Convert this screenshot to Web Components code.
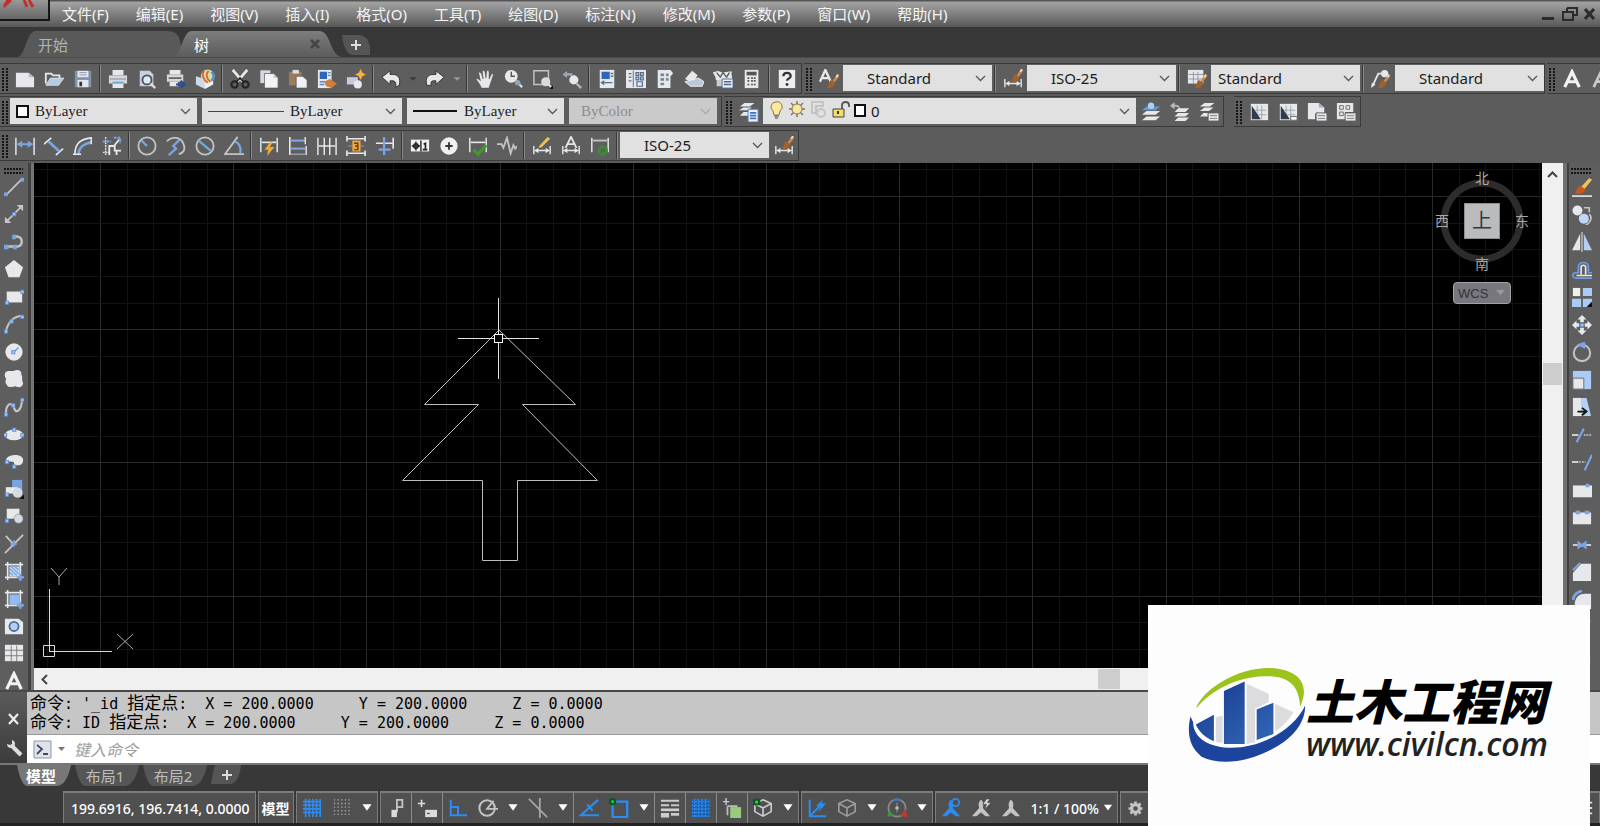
<!DOCTYPE html>
<html lang="zh-CN">
<head>
<meta charset="utf-8">
<title>树</title>
<style>
html,body{margin:0;height:100%;overflow:hidden;background:#5c5c5c}
body{font-family:"Noto Sans","Noto Sans CJK SC",sans-serif;font-size:15px;color:#fff}
</style>
</head>
<body>
<cad-app></cad-app>
<script>
const W='#e6e8ec',B='#7aa5e2',O='#f0a83c',BR='#a0622c',BL='#2b8cf2',LG='#c4c4c4';
const dimBar=`<path d="M2 11v9M20 11v9M3 16h16" stroke="${W}" stroke-width="1.500" fill="none"/><path d="M3 16l4-3v6zM19 16l-4-3v6z" fill="${W}"/>`;
const brush=(x,y)=>`<g transform="translate(${x} ${y})"><path d="M7 5L12-2" stroke="#c98a55" stroke-width="3"/><path d="M10 0l2-3" stroke="#f3dcc4" stroke-width="2"/><path d="M-1 11c3-1 2-5 5-8l5 3c-1 5-6 7-10 5z" fill="${BR}"/></g>`;
const dim=(y=6)=>`<path d="M2 ${y-4}v16M20 ${y-4}v16" stroke="${W}" stroke-width="1.600" fill="none"/>`;
const gear=`<circle cx="11" cy="11" r="5" fill="none" stroke="${LG}" stroke-width="4"/><path d="M11 2v4M11 16v4M2 11h4M16 11h4M4.500 4.500l3 3M14.500 14.500l3 3M4.500 17.500l3-3M14.500 7.500l3-3" stroke="${LG}" stroke-width="3.500"/>`;
const sheet=`<rect x="2" y="2" width="19" height="18" fill="${W}"/><path d="M9 4v15M14 4v15M3 9h16M3 14h16" stroke="#9aa3ae"/>`;
const person=c=>`<path d="M11 2c3 2 3 6 2 9l8 9h-5l-5-4-5 4H1l8-9c-1-3-1-7 2-9z" fill="${c}"/>`;
const cube=(c)=>`<path d="M11 2l9 4v9l-9 5-9-5V6zM2 6l9 5 9-5M11 11v9" fill="none" stroke="${c}" stroke-width="1.800"/>`;
const node=(x,y)=>`<rect x="${x-1.500}" y="${y-1.500}" width="3.500" height="3.500" fill="#a9c8f5" stroke="#5d8edb"/>`;
const ICONS={
new:`<path d="M1 4h14l6 5v11H1z" fill="${W}"/><path d="M15 4v5h6z" fill="#b5bcc6"/>`,
open:`<path d="M2 16V5h6l2 2h7v3" fill="none" stroke="${W}" stroke-width="2"/><path d="M2 18l5-8h15l-6 8z" fill="#b9cbe0" stroke="${W}" stroke-width=".8"/>`,
save:`<path d="M2 2h18v18H2z" fill="#7f93ad"/><path d="M5 2h12v7H5z" fill="${W}"/><path d="M7 4h8M7 6.500h8" stroke="#8b95a3"/><path d="M5 12h12v8H5z" fill="#e4e8ee"/><path d="M7 14h3v5H7z" fill="#333"/>`,
print:`<path d="M5 1h12v6H5zM5 15h12v6H5z" fill="${W}"/><path d="M1 7h20v9H1z" fill="#d4d7dc"/><path d="M2 11h18" stroke="#888"/><path d="M5 15h12" stroke="#69a6d6" stroke-width="2"/>`,
preview:`<path d="M3 2h11l4 4v13H3z" fill="#c7d0dc"/><circle cx="11" cy="12" r="5" fill="#d9ecf6" stroke="#4b5057" stroke-width="2"/><path d="M15 16l5 5" stroke="#ddd" stroke-width="2.500"/>`,
publish:`<path d="M4 1h12v5H4zM4 14h9v5H4z" fill="${W}"/><path d="M1 6h18v8H1z" fill="#d4d7dc"/><path d="M3 10h14" stroke="#444" stroke-width="1.500"/><path d="M11 17h9M16 13l5 4-5 4" stroke="#234f9e" stroke-width="2.200" fill="none"/>`,
globe:`<path d="M1 8l10 3v11l-10-5z" fill="#cfd9e8"/><path d="M11 11l9-3v9l-9 5z" fill="#eef2f7"/><circle cx="14" cy="8" r="7.500" fill="#cfe2a4"/><path d="M10 2c-3 4-1 10 4 13M15 2c-4 4-2 9 2 12" stroke="#e0603a" stroke-width="2" fill="none"/><path d="M18 3c3 3 3 7 0 10" stroke="#4b8fd6" stroke-width="2.500" fill="none"/>`,
cut:`<path d="M3 1l11 13M19 1L8 14" stroke="${W}" stroke-width="3"/><circle cx="5" cy="17" r="3.500" fill="none" stroke="#262626" stroke-width="2.500"/><circle cx="17" cy="17" r="3.500" fill="none" stroke="#262626" stroke-width="2.500"/><path d="M7 14l4-4 4 4" stroke="#262626" stroke-width="2" fill="none"/>`,
copy:`<path d="M1 1h12v15H1z" fill="#d6d9df" stroke="#555" stroke-width=".8"/><path d="M6 5h10l5 5v11H6z" fill="#f1f2f5" stroke="#555" stroke-width=".8"/><path d="M16 5v5h5" fill="#c2c7cf"/>`,
paste:`<path d="M1 3h14v15H1z" fill="#9a7c5c"/><path d="M5 1h7v4H5z" fill="#ddd"/><path d="M9 8h7l5 4v9H9z" fill="#f1f2f5" stroke="#555" stroke-width=".8"/>`,
match:`<path d="M1 1h15v20H1z" fill="${W}"/><path d="M3 3h8v8H3z" fill="#2f66b8"/><path d="M12 4h3M12 7h3M3 14h6M3 17h5" stroke="#5f87c8" stroke-width="1.500"/><path d="M8 14l6-3 8 5-6 5-6-2z" fill="#cf7d38"/>`,
bedit:`<path d="M1 9h12v8H1z" fill="#c4cbe0"/><circle cx="13" cy="17" r="4.500" fill="${W}"/><path d="M16 0l2 4 4 2-4 2-2 4-2-4-4-2 4-2z" fill="#f9b03c"/>`,
undo:`<path d="M1 9l9-7v4h3c6 0 9 4 7 12l-4 2c1-5 0-7-4-7h-2v4z" fill="${W}" stroke="#2e2e2e" stroke-width="1"/>`,
redo:`<path d="M21 9l-9-7v4H9c-6 0-9 4-7 12h5c-1-4 0-5 3-5h2v4z" fill="${W}" stroke="#2e2e2e" stroke-width="1"/>`,
dd:`<path d="M7 9h8l-4 4z" fill="#3a3a3a"/>`,
dd2:`<path d="M7 9h8l-4 4z" fill="#999"/>`,
hand:`<path d="M7 21c-1-4-4-7-6-10 2-1 3 0 5 2L4 4c1-1 2 0 3 1l2 6-1-9c1-1 2 0 3 1l1 7 1-8c1-1 2 0 2.500 1v8l3-6c1 0 2 1 1.500 2l-3 9c-1 2-1 4-2 5z" fill="${W}" stroke="#444" stroke-width=".5"/>`,
zoomrt:`<circle cx="8" cy="8" r="7" fill="${W}"/><path d="M8 3v5h4" stroke="#555" fill="none" stroke-width="1.500"/><path d="M13 13l7 7" stroke="#ddd" stroke-width="2.500"/><circle cx="15" cy="15" r="3" fill="#8fa4b4"/>`,
zoomwin:`<path d="M1 2h16v15H1z" fill="none" stroke="${LG}" stroke-width="1.600"/><circle cx="14" cy="14" r="5" fill="#d7dde3"/><path d="M17 17l3 3" stroke="#eee" stroke-width="2"/><path d="M22 18v4h-4z" fill="#111"/>`,
zoomprev:`<path d="M0 6l6-5v3h6v4H6v3z" fill="#9da3ab" stroke="#444" stroke-width=".6"/><circle cx="13" cy="12" r="5" fill="#e5e8ec"/><path d="M16 16l5 5" stroke="#bbb" stroke-width="2.500"/>`,
props:`<path d="M3 1h16v20H3z" fill="${W}"/><path d="M5 3h9v8H5z" fill="#2f66b8"/><path d="M15 5h3M15 8h3M5 15h12M8 13l-3 2 3 2" stroke="#5d6f8b" stroke-width="1.500" fill="none"/>`,
dcenter:`<path d="M0 1h22v20H0z" fill="${W}"/><path d="M8 2v18" stroke="#667"/><path d="M3 5h3M3 9h3M3 13h3M11 4h3v3h-3zM16 4h3v3h-3zM11 9h3v3h-3zM16 9h3v3h-3zM12 14h6v5h-6z" stroke="#526a90" fill="none" stroke-width="1.300"/>`,
palette:`<path d="M3 1h14l3 4-3 3v13H3z" fill="${W}"/><path d="M6 5h4v3H6zM12 5h3v3h-3zM6 10h4v3H6zM12 10h3v3h-3zM6 15h4v3H6z" fill="#7a8798"/>`,
sheetset:`<path d="M1 11l8-9 6 5-5 8z" fill="${W}"/><path d="M1 14l15-4 6 4-2 5H7z" fill="#b9c9da" stroke="#f4f4f4" stroke-width="1"/>`,
markup:`<path d="M0 3c3 1 4-2 8 0s7-1 13 0c-2 3 1 5 0 9H3c1-3-3-6-3-9z" fill="${W}"/><path d="M4 4l4 5 3-5 4 5 3-5" stroke="#555" fill="none" stroke-width="1.400"/><path d="M4 12h6v7H4z" fill="#ccc"/><path d="M10 11h12v10H10z" fill="#eaf0f8" stroke="#51688c"/><path d="M12 14h8M12 17h8" stroke="#51688c" stroke-width="1.500"/>`,
calc:`<path d="M3 1h15v20H3z" fill="${W}"/><path d="M5 3h11v4H5z" fill="#555"/><path d="M6 10h2M10 10h2M13 10h2M6 13h2M10 13h2M13 13h2M6 17h2M10 17h2M13 17h2" stroke="#555" stroke-width="1.800"/>`,
help:`<path d="M2 1h18v20H2z" fill="#eceef1"/><path d="M7 8c0-5 8-5 8 0 0 3-4 2-4 5" stroke="#333" stroke-width="2.500" fill="none"/><circle cx="11" cy="17" r="1.600" fill="#333"/>`,
tstyle:`<path d="M1 14L7 1l6 13M3 10h8" stroke="${W}" stroke-width="2.600" fill="none"/>${brush(9,9)}`,
dstyle:dimBar+brush(9,3),
tbstyle:`<path d="M1 1h17v15H1z" fill="${W}"/><path d="M7 3v13M12 3v13M2 6h16M2 11h16" stroke="#8d949e"/>${brush(9,9)}`,
mstyle:`<path d="M2 18L8 5h5" stroke="${W}" fill="none" stroke-width="2"/><path d="M0 21l1-6 4 2z" fill="${W}"/><circle cx="15" cy="5" r="4" fill="${W}"/>${brush(8,9)}`,
mtext:`<path d="M3 20L11 3l8 17M6 14h10" stroke="#f2f2f2" stroke-width="3.500" fill="none"/>`,
mtext2:`<path d="M3 20L11 3l8 17M6 14h10" stroke="#c9c9c9" stroke-width="3" fill="none"/>`,
layers:`<path d="M6 1h11l-5 4H1zM5 6h9l-4 3H0zM5 11h6v4H1z" fill="${W}"/><path d="M10 8h11v14H10z" fill="#eef3fb" stroke="#4f7bc0"/><path d="M12 12h7M12 15h7M12 18h7" stroke="#3f72c4" stroke-width="1.800"/>`,
laycur:`<path d="M6 5h15l-5 4H1z" fill="#5c9be0"/><circle cx="11" cy="4" r="3.500" fill="#a9d0f5"/><path d="M6 10h15l-5 4H1zM6 16h15l-5 4H1z" fill="${W}"/>`,
layprev:`<path d="M0 4l5-4v3c4 0 6 1 6 5-1-2-3-3-6-3v3z" fill="#bbb"/><path d="M9 7h12l-4 4H5zM9 12h12l-4 4H5zM9 17h12l-4 4H5z" fill="${W}"/>`,
laystate:`<path d="M6 1h11l-5 4H1zM6 6h10l-5 4H1zM5 12h5v4H1z" fill="${W}"/><path d="M10 12h12v9H10z" fill="${W}" stroke="#555"/><path d="M12 15h8M12 18h8" stroke="#777"/>`,
vp1:sheet+`<path d="M3 4l10 15H3z" fill="#2f3a4a"/>`,
vp2:sheet+`<path d="M3 4l10 15H3z" fill="#2f3a4a"/><path d="M14 16h7v4h-7z" fill="#fff" stroke="#666"/>`,
vp3:`<path d="M1 1h12l6 5v7H9v6H1z" fill="${W}"/><path d="M13 1v5h6" fill="#aab"/><path d="M10 12h12v9H10z" fill="${W}" stroke="#555"/><path d="M12 15h8M12 18h8" stroke="#777"/>`,
vp4:`<path d="M1 1h18v10h-9v8H1z" fill="${W}"/><path d="M4 4h4v4H4zM11 4h4v4h-4zM4 11h4v4H4z" fill="none" stroke="#666"/><path d="M10 12h12v9H10z" fill="${W}" stroke="#555"/><path d="M12 15h8M12 18h8" stroke="#777"/>`,
dlin:`<path d="M1 2v19M21 2v19" stroke="${W}" stroke-width="1.600"/><path d="M3 9h16" stroke="${B}" stroke-width="2.200"/><path d="M2 9l6-4v8zM20 9l-6-4v8z" fill="${B}"/>`,
dalign:`<path d="M0 9l8-7M13 21l8-7" stroke="${W}" stroke-width="1.800"/><path d="M5 6l12 11" stroke="${B}" stroke-width="3"/>`,
darc:`<path d="M2 21C2 8 8 3 21 2" stroke="${W}" fill="none" stroke-width="1.800"/><path d="M6 21C6 13 12 8 21 7" stroke="${B}" fill="none" stroke-width="3"/><path d="M0 20h9M20 1v8" stroke="${W}" stroke-width="1.600"/>`,
dord:`<path d="M4 1v20M1 18h9" stroke="${W}" stroke-dasharray="2 1" stroke-width="1.500"/><path d="M8 21v-10h6v5h7M13 11l6-7M16 21v-5" stroke="${W}" stroke-width="2" fill="none"/><path d="M1 6h9M13 2h7v6" stroke="${B}" stroke-width="2.200" stroke-dasharray="3 1" fill="none"/>`,
drad:`<circle cx="11" cy="11" r="9.500" fill="none" stroke="${LG}" stroke-width="2"/><path d="M11 11L5 5" stroke="${B}" stroke-width="2.500"/>`,
djog:`<path d="M1 6c5-6 15-5 18 2s0 11-5 12" fill="none" stroke="${LG}" stroke-width="2"/><path d="M3 21l8-7-3-3 7-7" stroke="${B}" stroke-width="2.500" fill="none"/>`,
ddia:`<circle cx="11" cy="11" r="9.500" fill="none" stroke="${LG}" stroke-width="2"/><path d="M4 5l14 12" stroke="${B}" stroke-width="2.500"/>`,
dang:`<path d="M15 1L1 20h21" stroke="${LG}" stroke-width="2" fill="none"/><path d="M12 6c5 2 7 7 6 13" stroke="${B}" stroke-width="2.500" fill="none"/>`,
dquick:dim()+`<path d="M3 7h16" stroke="${W}" stroke-width="1.800"/><path d="M12 7l-6 8h4l-1 7 8-10h-5l3-5z" fill="${O}"/>`,
dbase:`<path d="M2 1v20" stroke="${W}" stroke-width="1.800"/><path d="M3 5h16M3 14h16" stroke="${B}" stroke-width="2.500"/><path d="M19 1v8M20 11v10" stroke="${W}" stroke-width="1.500"/><path d="M2 20h18" stroke="${LG}"/>`,
dcont:`<path d="M1 2v19M8 2v19M14 2v19M21 2v19M2 11h18" stroke="${W}" stroke-width="1.600"/>`,
dspace:`<path d="M1 0v6M21 0v6M2 3h18M1 16v6M21 16v6M2 19h18" stroke="${W}" stroke-width="1.800"/><path d="M2 11h18" stroke="#999"/><path d="M7 5h9v12H7z" fill="${O}"/><path d="M9 8h4v7H9M10 11h3" stroke="#5a4010" stroke-width="1.500" fill="none"/>`,
dbreak:`<path d="M1 8h18M20 2v12" stroke="${W}" stroke-width="1.800"/><path d="M10 1v20M4 15h13" stroke="${B}" stroke-width="2.500"/>`,
tol:`<path d="M1 4h20v13H1z" fill="#f2f2f2"/><path d="M12 5v12M2 11h9M6.500 6v10" stroke="#222" stroke-width="1.500"/><circle cx="6.500" cy="11" r="2.500" fill="none" stroke="#222" stroke-width="1.500"/><path d="M15 9l2-1v7M14 15h5" stroke="#222" stroke-width="1.800" fill="none"/>`,
cmark:`<circle cx="11" cy="11" r="9.500" fill="#f0f0f0"/><path d="M7 11h8M11 7v8" stroke="#333" stroke-width="2"/>`,
dcheck:dim()+`<path d="M3 7h16" stroke="${W}" stroke-width="1.800"/><path d="M6 15l5 5 9-10" stroke="#3f9a2e" stroke-width="3.500" fill="none"/>`,
jogl:`<path d="M0 9h5l2 4 4-11 4 17 3-9 2 4 2-3" stroke="${LG}" stroke-width="2" fill="none"/>`,
dedit:dimBar+`<path d="M7 12L17 1l3 2-10 10z" fill="#f1c04c"/>`,
dtedit:dimBar+`<path d="M5 13l6-12 6 12M8 9h6" stroke="${W}" stroke-width="2" fill="none"/>`,
dupd:dim()+`<path d="M3 5h16" stroke="${LG}" stroke-width="2"/><circle cx="14" cy="16" r="4" stroke="#3d8a34" stroke-width="3.500" fill="none"/><path d="M11 19l6-6" stroke="#5e5e5e" stroke-width="1"/>`,
line:`<path d="M3 19L19 3" stroke="${LG}" stroke-width="2"/><rect x="0" y="17" width="4" height="4" fill="${B}"/><rect x="18" y="1" width="4" height="4" fill="${B}"/>`,
xline:`<path d="M4 18L18 4" stroke="${LG}" stroke-width="2"/><path d="M1 21v-7l7 7zM21 1v7l-7-7z" fill="${LG}"/>${node(11,11)}`,
pline:`<path d="M3 16h12c6-1 6-10 0-11h-3" stroke="${LG}" stroke-width="2.600" fill="none"/><rect x="0" y="14" width="5" height="5" fill="${B}"/><rect x="10" y="14" width="4" height="5" fill="${B}"/><rect x="9" y="3" width="4" height="5" fill="${B}"/>`,
poly:`<path d="M11 1l10 8-4 11H5L1 9z" fill="${W}"/>`,
rect:`<path d="M3 5h17v12H3z" fill="${W}"/>${node(20,5)}${node(3,17)}`,
arc:`<path d="M2 20C4 9 10 3 20 2" stroke="${LG}" stroke-width="2.200" fill="none"/>${node(2,19)}${node(8,8)}${node(20,3)}`,
circle:`<circle cx="11" cy="11" r="9.500" fill="${W}"/><path d="M11 11l5-5" stroke="${B}" stroke-width="1.800"/>${node(10,11)}`,
cloud:`<path d="M2 3c4-2 6 0 9-1 4-2 9 0 8 4 2 3 0 6 2 9 0 5-5 6-8 4-5 1-9 2-10-2-3-3 0-5-1-7-2-3-1-5 0-7z" fill="${W}"/>`,
spline:`<path d="M2 20c0-14 7-15 9-8s8 4 9-10" stroke="${LG}" stroke-width="2.400" fill="none"/>${node(2,19)}${node(10,9)}${node(20,3)}`,
ellipse:`<ellipse cx="11" cy="12" rx="10" ry="6" fill="${W}"/>${node(11,6)}${node(1,12)}${node(20,12)}`,
earc:`<path d="M2 11c0-8 19-9 19-1 0 7-7 6-10 5v-3z" fill="${W}"/>${node(3,12)}${node(11,17)}`,
insert:`<path d="M9 1h11v12H9z" fill="${B}"/><path d="M2 9h13v7H2z" fill="${W}"/><circle cx="15" cy="15" r="5.500" fill="#d5dae4"/>${node(3,17)}<path d="M22 17v5h-5z" fill="#111"/>`,
block:`<path d="M3 3h14v11H3z" fill="${W}"/><circle cx="16" cy="14" r="5" fill="#d5dae4" stroke="#777" stroke-width=".6"/>${node(3,16)}`,
point:`<path d="M1 21L21 1M2 2l9 10" stroke="${LG}" stroke-width="2"/><path d="M7 11h7M11 7v7" stroke="${B}" stroke-width="2"/>`,
hatch:`<path d="M4 1v20M18 1v20M1 4h20M1 18h20" stroke="${W}" stroke-width="1.800"/><path d="M6 6h11v11H6z" fill="#c4dcfa"/><path d="M6 8l8 8M8 6l8 8M6 12l4 4M12 6l4 4" stroke="${B}" stroke-width="1.500"/><path d="M14 18h8M18 14v8" stroke="${B}" stroke-width="2.200"/>`,
grad:`<path d="M4 1v20M18 1v20M1 4h20M1 18h20" stroke="${W}" stroke-width="1.800"/><path d="M6 6h11v11H6z" fill="#8fbcf4"/><path d="M14 18h8M18 14v8" stroke="${B}" stroke-width="2.200"/>`,
region:`<path d="M1 3h15l5 4v13H1z" fill="${W}"/><circle cx="11" cy="11.500" r="5" fill="#b6d0f2" stroke="#4a6ea8" stroke-width="2"/>`,
table:`<path d="M1 2h20v18H1z" fill="${W}"/><path d="M8 3v17M14 3v17M1 8h20M1 14h20" stroke="#777"/>`,
erase:`<path d="M0 21h22" stroke="${W}" stroke-width="1.800"/><path d="M10 11L19 1l3 2-8 10z" fill="#f2c255"/><path d="M3 18c2-2 2-7 7-8l5 4c-2 4-7 6-12 4z" fill="#c9561c"/>`,
copyo:`<circle cx="6" cy="6" r="5.500" fill="${W}"/><circle cx="13" cy="15" r="5.500" fill="#bcd7f8"/><path d="M19 10c4 4 1 10-4 12M13 3h6v5" stroke="${LG}" stroke-width="1.800" fill="none"/>`,
mirror:`<path d="M9 2v18H0z" fill="${W}"/><path d="M13 2v18h9z" fill="#b5cff0"/><path d="M11 0v22" stroke="${LG}" stroke-width="1.500"/>`,
offset:`<path d="M22 20H4c-4 0-4-6 0-6h3V8c0-7 11-7 11 0v6h4" stroke="#6e9ee6" stroke-width="1.800" fill="none"/><path d="M22 17H5M10 16V8c0-3 5-3 5 0v8" stroke="${W}" stroke-width="1.800" fill="none"/>`,
array:`<path d="M1 1h8v9H1z" fill="#f0f0e8"/><path d="M12 1h10v9H12zM0 13h10v9H0zM12 13h10v9H12z" fill="#a9cbf6"/><path d="M22 16v6h-6z" fill="#111"/>`,
move:`<path d="M11 0l5 5h-3v3H9V5H6zM11 22l5-5h-3v-3H9v3H6zM0 11l5-5v3h3v4H5v3zM22 11l-5-5v3h-3v4h3v3z" fill="${W}"/>${node(11,11)}`,
rotate:`<circle cx="11" cy="12" r="9" stroke="${LG}" stroke-width="2.200" fill="none"/><path d="M6 3l8-3v7z" fill="${B}" stroke="${B}"/>`,
scale:`<path d="M1 1h20v20H1z" fill="#a9cbf6"/><path d="M1 9h12v12H1z" fill="${W}" stroke="#667"/>`,
stretch:`<path d="M1 1h9v20H1z" fill="${W}"/><path d="M10 1h6l5 20H10z" fill="#b5d1f5"/><path d="M6 16h8M11 12l5 4-5 4" stroke="#111" stroke-width="2" fill="none"/>`,
trim:`<path d="M0 11h7" stroke="${W}" stroke-width="1.800"/><path d="M13 11h9" stroke="${LG}" stroke-width="1.500" stroke-dasharray="2 1"/><path d="M5 19l8-15" stroke="${B}" stroke-width="2.400"/>`,
extend:`<path d="M0 11h7" stroke="${W}" stroke-width="1.800"/><path d="M8 11h7" stroke="${LG}" stroke-width="1.500" stroke-dasharray="2 1"/><path d="M14 20l8-17" stroke="${B}" stroke-width="2.400"/>`,
brk1:`<path d="M1 6h21v13H1z" fill="${W}"/><rect x="15" y="4" width="4" height="4" fill="${B}"/>`,
brk2:`<path d="M1 6h20v13H1z" fill="${W}"/><rect x="4" y="4" width="5" height="4" fill="${B}"/><rect x="14" y="4" width="5" height="4" fill="${B}"/>`,
join:`<path d="M1 11h20" stroke="${W}" stroke-width="1.800"/><path d="M7 8l4 3-4 3zM15 8l-4 3 4 3z" fill="${B}" stroke="${B}" stroke-width="2"/>`,
chamfer:`<path d="M10 2h11v19H1v-9z" fill="${W}"/><path d="M1 9l8-8" stroke="${B}" stroke-width="2.400"/>`,
fillet:`<path d="M14 4h7v17H3v-5C3 9 7 4 14 4z" fill="${W}"/><path d="M1 11c1-6 5-9 10-10" stroke="${B}" stroke-width="3" fill="none"/>`,
blend:`<path d="M2 18c2-12 10 2 18-14" stroke="${B}" stroke-width="2" fill="none"/>`,
explode:`<path d="M3 12h7v7H3zM12 3h7v7h-7z" fill="${W}"/><path d="M13 13h7v7h-7z" fill="${B}"/>`,
sgrid:`<path d="M4 1v20M8 1v20M12 1v20M16 1v20M20 1v20M1 4h20M1 8h20M1 12h20M1 16h20" stroke="${BL}" stroke-width="1.800"/>`,
sdots:`<path d="M2 2h18M2 6h18M2 10h18M2 14h18M2 18h18" stroke="#a4a4a4" stroke-width="1.500" stroke-dasharray="1.500 2.500"/>`,
caret:`<path d="M6 7h10l-5 7z" fill="#fff"/>`,
infer:`<path d="M11 2h7v8h-6M12 2v14" stroke="${LG}" stroke-width="2" fill="none"/><path d="M6 13h6v8H6z" fill="#ddd"/>`,
dyn:`<path d="M1 6h8M5 2v8" stroke="#ddd" stroke-width="1.800"/><path d="M9 13h13v8H9z" fill="#ddd"/><path d="M11 17h3" stroke="#555" stroke-width="1.500"/>`,
ortho:`<path d="M3 2v17h18M3 10h8v9" stroke="${BL}" stroke-width="2.200" fill="none"/>`,
polar:`<circle cx="10" cy="11" r="8.500" stroke="${LG}" stroke-width="2.200" fill="none"/><path d="M17 3l-7 9h12" stroke="${LG}" stroke-width="2" fill="none"/>`,
iso:`<path d="M1 1l20 20M13 0v22" stroke="#a4a4a4" stroke-width="2"/>`,
otrack:`<path d="M21 2L2 19h20" stroke="${BL}" stroke-width="2.400" fill="none"/><path d="M9 7l6 7" stroke="${BL}" stroke-width="2.400"/>`,
osnap:`<path d="M4 4h16v17H4z" stroke="${BL}" stroke-width="2.600" fill="none"/><circle cx="4" cy="4" r="4" fill="#0b5a1c"/><circle cx="4" cy="4" r="1.500" fill="#2bd05a"/>`,
lwt:`<path d="M1 3h20M1 8h9" stroke="#ccc" stroke-width="2.200"/><path d="M12 8h9" stroke="#ccc" stroke-width="2"/><path d="M1 13h20" stroke="#ccc" stroke-width="3"/><path d="M1 19h9" stroke="#ccc" stroke-width="5"/><path d="M12 18h9" stroke="#ccc" stroke-width="3"/>`,
transp:`<path d="M1 1h20v20H1z" fill="#1c63b8"/><path d="M1 4h20M1 8h20M1 12h20M1 16h20M1 20h20M4 1v20M8 1v20M12 1v20M16 1v20" stroke="#3d9aff" stroke-dasharray="2 1.500"/>`,
cycle:`<path d="M1 4h7M4.500 0v8" stroke="#ccc" stroke-width="1.500"/><path d="M6 9h11M6 9v10" stroke="#bbb" stroke-width="2"/><path d="M9 10h12v12H9z" fill="#9acb7c"/>`,
osnap3:cube('#ccc')+`<rect x="0" y="1" width="8" height="7" fill="#0b5a1c"/><circle cx="4" cy="4.500" r="1.800" fill="#2bd05a"/>`,
ducs:`<path d="M3 2v18h18M3 20L16 7" stroke="${BL}" stroke-width="2.200" fill="none"/><path d="M18 1l-8 8h5l-3 7 9-10h-5z" fill="${BL}"/>`,
selfil:cube('#9c9c9c'),
gizmo:`<circle cx="11" cy="11" r="9.500" stroke="#8a8a8a" stroke-width="2" fill="none"/><path d="M11 5v11" stroke="#777" stroke-width="2"/><path d="M7 3c2-2 6-2 8 0" stroke="#3b78c9" stroke-width="2.400" fill="none"/><circle cx="11" cy="11" r="2" fill="#bbb"/><path d="M2 15l5 4-6 1z" fill="#39963f" stroke="#39963f"/><path d="M20 14l-4 5 5 1z" fill="#c03a32" stroke="#c03a32" stroke-width="2"/>`,
ann1:person(BL)+`<circle cx="16" cy="5" r="4" fill="#505050" stroke="${BL}" stroke-width="2"/>`,
ann2:person('#c4c4c4')+`<path d="M17 1l-4 6h4l-2 6 7-8h-4l3-4z" fill="#ddd" stroke="#505050" stroke-width=".8"/>`,
ann3:person('#c4c4c4'),
gear,
menu:`<path d="M3 5h17M3 11h17M3 17h17" stroke="#ddd" stroke-width="2"/>`
};
const svg=(n,s)=>`<svg viewBox="0 0 22 22" width="${s}" height="${s}" aria-hidden="true">${ICONS[n]}</svg>`;
const BTN='button{all:unset;box-sizing:border-box;display:flex;align-items:center;justify-content:center;flex:none}svg{display:block;flex:none}';
function define(name,render){
  customElements.define(name,class extends HTMLElement{
    connectedCallback(){
      if(this.shadowRoot)return;
      const root=this.attachShadow({mode:'open'});
      root.innerHTML=render(this);
    }
  });
}
const attr=(e,n,d='')=>e.getAttribute(n)||d;

define('icon-strip',e=>{
  const v=e.hasAttribute('vertical'),s=attr(e,'size','20');
  return `<style>:host{display:flex;align-items:stretch;flex:none}
  :host([vertical]){flex-direction:column;justify-content:space-between;flex:1}
  ${BTN} button{width:29px}.n{width:15px}:host([vertical]) button{width:auto;height:18px}
  i{flex:none;width:6px;box-sizing:border-box;background:linear-gradient(90deg,transparent 2px,#383838 2px,#383838 3px,#8a8a8a 3px,#8a8a8a 4px,transparent 4px)}</style>`+
  attr(e,'icons').split(' ').map(n=>n==='|'?'<i></i>':`<button aria-label="${n}" class="${n==='dd'||n==='dd2'?'n':''}">${svg(n,s)}</button>`).join('');
});
define('tool-frame',e=>`<style>:host{display:flex;flex:none;box-sizing:border-box;height:31px;border:1px solid #3a3a3a;border-left:0;padding:1px 0;background:#5e5e5e}
 b{flex:none;width:7px;margin:3px 1px 0 2px;background:repeating-linear-gradient(180deg,#161616 0 2px,transparent 2px 3px) 0 0/2px 100% no-repeat,repeating-linear-gradient(180deg,#161616 0 2px,transparent 2px 3px) 4px 0/2px 100% no-repeat}</style><b></b><slot></slot>`);
define('drop-list',e=>`<style>:host{display:grid;flex:none;background:#e1e1e1;color:#1c1c1c;align-items:center;margin-bottom:1px}
 select{all:unset;grid-area:1/1;box-sizing:border-box;width:100%;padding-left:var(--indent,24px);font:${attr(e,'font','15px/22px "Noto Sans",sans-serif')};white-space:pre}
 .s{grid-area:1/1;display:flex;align-items:center;padding-left:6px;pointer-events:none}
 svg.c{grid-area:1/1;justify-self:end;margin-right:6px;pointer-events:none}
 :host([disabled]){background:#cacaca;color:#8c8c8c}</style>
 <select aria-label="${attr(e,'label')}" ${e.hasAttribute('disabled')?'disabled':''}><option>${attr(e,'value')}</option></select><span class="s"><slot></slot></span>
 <svg class="c" width="11" height="7"><path d="M1 1l4.500 4.500L10 1" fill="none" stroke="${e.hasAttribute('disabled')?'#aaa':'#555'}" stroke-width="1.300"/></svg>`);
define('menu-bar',()=>`<style>:host{display:flex;flex:none;height:27px;background:linear-gradient(#555 0 1px,#a3a3a3 2px,#585858)}
 .logo{width:50px;height:21px;box-sizing:border-box;border:solid #151515;border-width:0 2px 2px 0;background:linear-gradient(#999,#666);flex:none}
 nav{display:flex;flex:1;gap:27px;padding-left:12px;align-items:center}
 a{color:#f4f4f4;text-decoration:none;font-size:15px;line-height:24px;white-space:nowrap}
 ${BTN} .win{display:flex;padding-right:4px;gap:6px;align-items:center}</style>
 <div class="logo"><svg width="48" height="19"><path d="M4 6L11 0M8 0l-4 7M24 0l3 7M29 0l4 7" stroke="#c3302a" stroke-width="3"/></svg></div><nav>`+
 ['文件(F)','编辑(E)','视图(V)','插入(I)','格式(O)','工具(T)','绘图(D)','标注(N)','修改(M)','参数(P)','窗口(W)','帮助(H)'].map(t=>`<a href="#">${t}</a>`).join('')+
 `</nav><div class="win"><button aria-label="最小化"><svg width="14" height="14"><path d="M0 10h12v3H0z" fill="#2b2b2b"/></svg></button><button aria-label="还原"><svg width="16" height="14"><path d="M5 1h10v7h-3M5 4V1M1 5h10v8H1z" stroke="#2b2b2b" stroke-width="2" fill="none"/></svg></button><button aria-label="关闭"><svg width="12" height="12"><path d="M1 1l9 10M10 1L1 11" stroke="#2b2b2b" stroke-width="3"/></svg></button></div>`);
define('doc-tabs',()=>`<style>:host{display:flex;flex:none;height:31px;background:#383838;align-items:flex-end;box-sizing:border-box;border-bottom:1px solid #4b4b4b;padding-left:18px}
 ${BTN} .t{display:grid;width:168px;height:26px;margin-right:-12px}
 .t>*{grid-area:1/1}.t button{justify-content:flex-start;width:100%;padding:0 20px;font-size:15px;color:#b4b4b4}.t.on button{color:#fff}
 .x{align-self:center;justify-self:end;margin-right:22px}.add{margin:0 0 2px 12px}</style>
 <div class="t"><svg width="168" height="26"><path d="M0 26C8 24 8 0 18 0h132q10 0 12 10l4 16z" fill="#595959"/></svg><button>开始</button></div>
 <div class="t on"><svg width="168" height="26"><defs><linearGradient id="g" x2="0" y2="1"><stop stop-color="#7d7d7d"/><stop offset="1" stop-color="#5c5c5c"/></linearGradient></defs><path d="M0 26C8 24 8 0 18 0h127c12 0 10 22 22 26z" fill="url(#g)"/></svg><button>树</button><svg class="x" width="10" height="10"><path d="M1 1l8 8M9 1L1 9" stroke="#444" stroke-width="2.500"/></svg></div>
 <button class="add" aria-label="新图形"><svg width="28" height="20"><path d="M0 0h18q8 1 10 12v8H10Q2 18 0 0z" fill="#555"/><path d="M14 5v10M9 10h10" stroke="#ddd" stroke-width="2"/></svg></button>`);
const serif='15px/18px "Liberation Serif",serif';
define('tool-rows',()=>`<style>:host{display:flex;flex-direction:column;flex:none;gap:2px;padding:5px 0 1px;overflow:hidden}
 .r{display:flex;gap:2px;height:31px;align-items:flex-start}.r+.r{height:32px}.w{width:149px}.sep{width:5px;flex:none}.sw{box-sizing:border-box;width:13px;height:13px;border:2px solid #111;background:#fff}
 .ln{height:1px;background:#444}</style>
 <div class="r"><tool-frame><icon-strip icons="new open save | print preview publish globe | cut copy paste match bedit | undo dd redo dd2 | hand zoomrt zoomwin zoomprev | props dcenter palette sheetset markup calc | help"></icon-strip></tool-frame>
 <tool-frame><icon-strip icons="tstyle"></icon-strip><drop-list class="w" label="文字样式" value="Standard"></drop-list><icon-strip icons="| dstyle"></icon-strip><drop-list class="w" label="标注样式" value="ISO-25"></drop-list><icon-strip icons="| tbstyle"></icon-strip><drop-list class="w" label="表格样式" value="Standard" style="--indent:7px"></drop-list><icon-strip icons="| mstyle"></icon-strip><drop-list class="w" label="多重引线样式" value="Standard"></drop-list></tool-frame>
 <tool-frame><icon-strip icons="mtext mtext2"></icon-strip></tool-frame></div>
 <div class="r"><tool-frame><drop-list style="width:187px;--indent:25px" font='${serif}' label="颜色" value="ByLayer"><span class="sw"></span></drop-list><span class="sep"></span><drop-list style="width:200px;--indent:88px" font='${serif}' label="线型" value="ByLayer"><span class="ln" style="width:76px"></span></drop-list><span class="sep"></span><drop-list style="width:157px;--indent:57px" font='${serif}' label="线宽" value="ByLayer"><span class="ln" style="width:44px;height:2px;background:#111"></span></drop-list><span class="sep"></span><drop-list disabled style="width:148px;--indent:12px" font='${serif}' label="打印样式" value="ByColor"></drop-list><span style="width:4px"></span></tool-frame>
 <tool-frame><icon-strip icons="layers"></icon-strip><drop-list style="width:373px;--indent:108px" label="图层" value="0"><svg width="98" height="22">
 <path d="M7 2a5 5 0 0 0-3 9l1 4h5l1-4a5 5 0 0 0-4-9z" fill="#fbe9a0" stroke="#8a7b40"/><path d="M5 16h5M6 18h3" stroke="#777" stroke-width="1.500"/>
 <g transform="translate(28 9)"><path d="M-8 0H8M0-8V8M-6-6L6 6M-6 6L6-6" stroke="#777" stroke-width="1.500"/><circle r="5" fill="#fbe9a0" stroke="#8a7b40"/></g>
 <path d="M43 2h11v4h-7v7h-4z" fill="none" stroke="#bbb" stroke-width="1.500"/><circle cx="52" cy="13" r="4" fill="none" stroke="#c4c4c4" stroke-width="2"/>
 <path d="M64 9h11v8H64z" fill="#f2dd6b" stroke="#444"/><path d="M73 9V5c0-4 7-4 7 0v2" fill="none" stroke="#555" stroke-width="1.800"/><path d="M69 11v3" stroke="#333" stroke-width="2"/>
 <path d="M86 5h10v11H86z" fill="#fff" stroke="#111" stroke-width="2"/></svg></drop-list><icon-strip icons="laycur layprev laystate"></icon-strip></tool-frame><span style="width:6px"></span>
 <tool-frame><icon-strip icons="vp1 vp2 vp3 vp4"></icon-strip></tool-frame></div>
 <div class="r"><tool-frame><icon-strip icons="dlin dalign darc dord | drad djog ddia dang | dquick dbase dcont dspace dbreak | tol cmark dcheck jogl | dedit dtedit dupd |"></icon-strip><drop-list class="w" label="标注样式" value="ISO-25"></drop-list><icon-strip icons="dstyle"></icon-strip></tool-frame></div>`);
define('side-dock',e=>`<style>:host{display:flex;flex-direction:column;flex:none;box-sizing:border-box;background:#5e5e5e;overflow:hidden;min-height:0}
 b{flex:none;height:6px;margin:5px 4px 4px;background:repeating-linear-gradient(90deg,#161616 0 2px,transparent 2px 3px) 0 0/100% 2px no-repeat,repeating-linear-gradient(90deg,#161616 0 2px,transparent 2px 3px) 0 4px/100% 2px no-repeat}</style><b></b><slot></slot>`);
define('view-cube',()=>`<style>:host{display:flex;flex-direction:column;align-items:center;gap:10px;color:#a8a8a8;font-size:14px;line-height:16px}
 .c{display:grid;grid-template:repeat(3,auto)/auto 1fr auto;width:94px;height:102px;align-content:space-between;place-items:center;background:radial-gradient(circle,transparent 34px,#2c2c2c 35px 41px,transparent 42px)}
 .n{grid-area:1/2}.w{grid-area:2/1}.e{grid-area:2/3}.s{grid-area:3/2}
 button{all:unset}.top{grid-area:2/2;width:36px;height:36px;background:#b9bbbd;border:1px solid #8d8f92;box-sizing:border-box;color:#33363c;font-size:20px;line-height:30px;text-align:center}
 .u{box-sizing:border-box;width:58px;height:22px;border:1px solid #a2a2a6;border-radius:4px;background:#77777d;color:#33343a;font:13px/19px "Liberation Sans",sans-serif;padding-left:4px;display:flex;align-items:center;gap:8px}</style>
 <div class="c"><span class="n">北</span><span class="w">西</span><button class="top">上</button><span class="e">东</span><span class="s">南</span></div>
 <button class="u">WCS<svg width="9" height="6"><path d="M0 0h9L4.500 5z" fill="#9a9aa0"/></svg></button>`);
define('draw-area',()=>{
  let g='';
  for(let k=-3;k<100;k++){
    const x=Math.round(66+k*26.64),y=Math.round(33+k*26.64),c=k%5===0?'#262a28':'#111312';
    if(x>=0)g+=`<path d="M${x} 0h1v2000h-1z" fill="${c}"/>`;
    if(y>=0)g+=`<path d="M0 ${y}h3000v1H0z" fill="${c}"/>`;
  }
  return `<style>:host{display:grid;flex:1;min-width:0;min-height:0;background:#000;overflow:hidden;grid-template:minmax(0,1fr)/minmax(0,1fr)}
  :host>*{grid-area:1/1}.m{width:100%;height:100%}.u{place-self:end start;margin:0 0 9px 9px}view-cube{place-self:start end;margin:7px 13px 0 0}</style>
  <svg class="m" shape-rendering="crispEdges">${g}<g fill="none" stroke="#bdbdbd"><path shape-rendering="auto" d="M465 167L541.500 241.500H488.500L563.500 317.500H483.500V397.500H448.500V317.500H368.500L444.500 241.500H390.500Z" /><path d="M424 175.500h36M469 175.500h36M464.500 135v36M464.500 180v36" stroke="#e4e4e4"/><path d="M460.500 171.500h8v8h-8z" fill="#000" stroke="#fff"/></g></svg>
  <svg class="u" width="96" height="92" fill="none" stroke="#dcdcdc"><path d="M.500 78.500h11v11h-11zM6.500 84V22M6 84.500h63"/><path d="M8 1l8 9 8-9M16 10v8M74 67l16 15M90 67L74 82" stroke="#aaa"/></svg>
  <view-cube></view-cube>`;
});
define('work-space',()=>`<style>:host{display:flex;flex:1;min-height:0;border-bottom:2px solid #484848}
 .mid{display:flex;flex-direction:column;flex:1;min-width:0}.row{display:flex;flex:1;min-height:0}
 .v{width:21px;background:#f0f0f0;display:flex;flex-direction:column;align-items:center;flex:none;padding-top:8px;box-sizing:border-box}
 .v i{width:19px;height:22px;background:#cdcdcd;margin-top:185px}
 .h{height:22px;background:#f0f0f0;display:flex;align-items:center;flex:none;padding-left:7px}.h i{height:20px;width:22px;background:#cdcdcd;margin-left:69%}
 .l{width:34px;border-right:3px solid #747474;padding:0 4px 0 0;box-shadow:inset -3px 0 #404040}
 .r{width:37px;border-left:4px solid #707070;padding:0 4px 26px 0;box-shadow:inset 2px 0 #404040}</style>
 <side-dock class="l"><icon-strip vertical icons="line xline pline poly rect arc circle cloud spline ellipse earc insert block point hatch grad region table mtext"></icon-strip></side-dock>
 <div class="mid"><div class="row"><draw-area></draw-area><div class="v"><svg width="11" height="7"><path d="M1 6l4.500-4.500L10 6" fill="none" stroke="#444" stroke-width="2"/></svg><i></i></div></div>
 <div class="h"><svg width="7" height="11"><path d="M6 1L1.500 5.500 6 10" fill="none" stroke="#444" stroke-width="2"/></svg><i></i></div></div>
 <side-dock class="r"><icon-strip vertical icons="erase copyo mirror offset array move rotate scale stretch trim extend brk1 brk2 join chamfer fillet blend explode"></icon-strip></side-dock>`);
define('command-line',()=>`<style>:host{display:flex;flex:none;height:71px;border-bottom:2px solid #777}
 ${BTN} .b{width:27px;flex:none;display:flex;flex-direction:column;align-items:center;gap:13px;padding-top:20px;box-sizing:border-box;background:linear-gradient(#5a5a5a,#3c3c3c)}
 .m{flex:1;display:flex;flex-direction:column;min-width:0}.log{height:43px;background:#c6c6c6;box-sizing:border-box;padding:2px 3px;border-bottom:1px solid #999}
 p{margin:0;white-space:pre;color:#000;font:15px/19px "DejaVu Sans Mono","Noto Sans CJK SC",monospace;height:19px}p span{font-size:17px}
 .in{flex:1;background:#fff;display:flex;align-items:center;padding-left:6px;gap:6px}
 input{all:unset;flex:1;font:italic 16px "Noto Sans CJK SC",sans-serif;color:#222;padding-left:3px}input::placeholder{color:#a0a0a0}</style>
 <div class="b"><button aria-label="关闭"><svg width="14" height="14"><path d="M2 2l9 10M11 2L2 12" stroke="#eee" stroke-width="2.200"/></svg></button><button aria-label="自定义"><svg width="18" height="18"><path d="M7 7l9 9" stroke="#ddd" stroke-width="4"/><path d="M2 5c0 4 4 5 7 3 2-3 1-6-2-7v4l-2 1z" fill="#ddd"/></svg></button></div>
 <div class="m"><div class="log"><p><span>命令</span>: '_id <span>指定点</span>:  X = 200.0000     Y = 200.0000     Z = 0.0000</p><p><span>命令</span>: ID <span>指定点</span>:  X = 200.0000     Y = 200.0000     Z = 0.0000</p></div>
 <div class="in"><svg width="19" height="19"><path d="M1 1h17v17H1z" fill="#dde3ea" stroke="#8b97a5"/><path d="M4 5l5 4-5 5M10 14h5" stroke="#3c4c60" stroke-width="1.800" fill="none"/></svg><svg width="7" height="4"><path d="M0 0h7L3.500 4z" fill="#777"/></svg><input aria-label="命令" placeholder="键入命令"></div></div>`);
define('layout-tabs',()=>`<style>:host{display:flex;flex:none;height:26px;background:#383838;padding-left:11px;align-items:flex-start}
 ${BTN} .t{display:grid;width:68px;height:21px;flex:none}.t>*{grid-area:1/1}.t button{font-size:15px;line-height:20px;color:#bdbdbd;width:100%}.on button{color:#fff;font-weight:700}
 .on{width:60px}</style>
 <div class="t on"><svg width="60" height="21"><path d="M0 0h60q-4 20-14 21H16Q10 20 6 0z" fill="#777"/></svg><button>模型</button></div>
 <div class="t"><svg width="68" height="21"><path d="M0 0h68q-4 20-14 21H14Q8 20 4 0z" fill="#565656"/></svg><button>布局1</button></div>
 <div class="t"><svg width="68" height="21"><path d="M0 0h68q-4 20-14 21H14Q8 20 4 0z" fill="#565656"/></svg><button>布局2</button></div>
 <button aria-label="新布局"><svg width="34" height="21"><path d="M8 0h26q-2 18-11 19H4Q6 6 8 0z" fill="#555"/><path d="M20 5v10M15 10h10" stroke="#ddd" stroke-width="2"/></svg></button>`);
define('status-bar',()=>{
  const box=s=>`<div class="g">${s.split(' ').map(n=>n==='|'?'<i></i>':`<button aria-label="${n}" class="${n==='caret'?'k':''}">${svg(n,20)}</button>`).join('')}</div>`;
  return `<style>:host{display:flex;flex:none;height:35px;box-sizing:border-box;background:#383838;padding-left:63px;gap:2px;border-bottom:3px solid #222}
  ${BTN} .g{display:flex;flex:none;align-items:stretch;border:solid #7c7c7c;border-width:2px 1px 0;background:#505050;font-weight:500;white-space:nowrap}
  button{width:30px}.k{width:20px}i{width:1px;background:#8a8a8a}.t{padding:0 5px 0 7px;align-items:center;font-size:14px}.m{padding:0 3px;font-weight:700;font-size:14px;align-items:center}
  .sc{width:auto;padding:0 0 0 5px;font-size:14px}.k.e{width:18px}.last{flex:1;justify-content:space-between}</style>
  <div class="g t"><span>199.6916, 196.7414, 0.0000</span></div><div class="g m"><span>模型</span></div>`+
  box('sgrid sdots caret')+box('infer | dyn | ortho polar caret iso caret | otrack osnap caret | lwt | transp | cycle | osnap3 caret')+box('ducs selfil caret gizmo caret')+
  `<div class="g">${['ann1','ann2','ann3'].map(n=>`<button aria-label="${n}">${svg(n,20)}</button>`).join('')}<button class="sc">1:1 / 100%</button><button class="k e" aria-label="比例">${svg('caret',18)}</button></div>
  <div class="g last"><button aria-label="设置">${svg('gear',17)}</button><button aria-label="自定义">${svg('menu',20)}</button></div>`;
});
define('site-badge',()=>`<style>:host{display:flex;box-sizing:border-box;width:442px;height:221px;background:#fdfdfd;padding:62px 0 0 40px;gap:0;color:#000}
 svg{flex:none}div{display:flex;flex-direction:column;padding-top:14px;white-space:nowrap}
 strong{font:italic 900 48px/46px "Liberation Sans","Noto Sans CJK SC",sans-serif}span{font:italic 600 32px/34px "Open Sans","Noto Sans",sans-serif;color:#222}</style>
 <svg width="118" height="97" viewBox="145 200 352 290"><defs><linearGradient id="b" x2="1" y2="1"><stop stop-color="#173a8c"/><stop offset="1" stop-color="#3468b8"/></linearGradient></defs>
 <path d="M168 325C190 262 300 200 390 203C480 207 510 255 480 318C476 250 440 225 370 228C290 232 220 265 168 325Z" fill="#9cc21c"/>
 <path d="M228 350L248 345V428L228 424ZM320 250L386 280V305L345 325V425L320 430ZM405 310L460 335C440 365 425 380 405 392Z" fill="#dcdcde"/>
 <path d="M168 372L222 343V422C195 410 178 395 168 372ZM252 272L314 243V430H252ZM350 327L400 307V400L350 418Z" fill="url(#b)"/>
 <path d="M152 348C140 400 150 440 185 468C250 500 350 480 430 425C470 395 495 360 495 315C470 370 400 420 330 435C250 455 160 430 160 365Z" fill="#1c449c"/></svg>
 <div><strong>土木工程网</strong><span>www.civilcn.com</span></div>`);
define('cad-app',()=>`<style>:host{display:flex;flex-direction:column;height:100vh;overflow:hidden;background:#5c5c5c}
 site-badge{position:absolute;right:10px;bottom:0}</style>
 <menu-bar></menu-bar><doc-tabs></doc-tabs><tool-rows></tool-rows><work-space></work-space><command-line></command-line><layout-tabs></layout-tabs><status-bar></status-bar><site-badge></site-badge>`);
</script>
</body>
</html>
